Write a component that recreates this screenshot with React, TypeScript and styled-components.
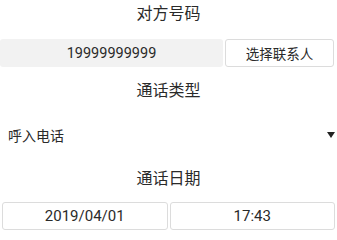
import React from "react";
import styled, { createGlobalStyle } from "styled-components";

const GlobalStyle = createGlobalStyle`
  html, body {
    margin: 0;
    padding: 0;
    background: #fff;
  }
  body {
    font-family: Roboto, "Noto Sans CJK SC", sans-serif;
    color: #2a2a2a;
  }
`;

const Page = styled.div`
  width: 337px;
  display: flex;
  flex-direction: column;
`;

const SectionTitle = styled.div<{ top?: number }>`
  height: 27px;
  line-height: 27px;
  margin-top: ${({ top }) => top ?? 0}px;
  text-align: center;
  font-size: 16px;
  color: #2a2a2a;
`;

const Row = styled.div<{ top: number; gap: number }>`
  display: flex;
  gap: ${({ gap }) => gap}px;
  margin-top: ${({ top }) => top}px;
  height: 28px;
`;

const NumberField = styled.div`
  width: 223px;
  background: #f2f2f2;
  border-radius: 3px;
  display: flex;
  align-items: center;
  justify-content: center;
  font-size: 14.5px;
  color: #2a2a2a;
`;

const PickButton = styled.button`
  width: 109px;
  box-sizing: border-box;
  border: 1px solid #dcdcdc;
  border-radius: 3px;
  background: #fff;
  font-family: Roboto, "Noto Sans CJK SC", sans-serif;
  font-size: 13.5px;
  color: #2a2a2a;
  padding: 0;
`;

const Select = styled.div`
  display: flex;
  align-items: center;
  justify-content: space-between;
  height: 40px;
  margin-top: 11px;
  padding: 0 2px 0 8px;
  font-size: 14px;
  color: #2a2a2a;
`;

const Caret = styled.span`
  width: 0;
  height: 0;
  border-left: 4px solid transparent;
  border-right: 4px solid transparent;
  border-top: 6px solid #222;
`;

const DateRow = styled(Row)`
  padding: 0 2px;
`;

const PickerBox = styled.div`
  flex: 1;
  box-sizing: border-box;
  border: 1px solid #dcdcdc;
  border-radius: 3px;
  display: flex;
  align-items: center;
  justify-content: center;
  font-size: 15px;
  color: #2a2a2a;
`;

export default function App() {
  return (
    <>
      <GlobalStyle />
      <Page>
        <SectionTitle>对方号码</SectionTitle>
        <Row top={12} gap={2}>
          <NumberField>19999999999</NumberField>
          <PickButton>选择联系人</PickButton>
        </Row>
        <SectionTitle top={10}>通话类型</SectionTitle>
        <Select>
          <span>呼入电话</span>
          <Caret />
        </Select>
        <SectionTitle top={10}>通话日期</SectionTitle>
        <DateRow top={10} gap={2}>
          <PickerBox>2019/04/01</PickerBox>
          <PickerBox>17:43</PickerBox>
        </DateRow>
      </Page>
    </>
  );
}
